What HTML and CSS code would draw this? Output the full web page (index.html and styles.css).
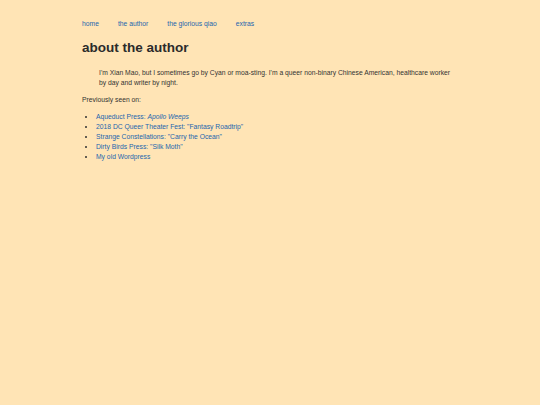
FILE: index.html
```html
<!DOCTYPE html>
<html lang="en">
<head>
<meta charset="utf-8">
<title>about the author</title>
<link rel="stylesheet" href="styles.css">
</head>
<body>
<div class="page">
  <nav class="nav">
    <a href="#">home</a>
    <a href="#">the author</a>
    <a href="#">the glorious qiao</a>
    <a href="#">extras</a>
  </nav>
  <h1 class="title">about the author</h1>
  <p class="bio">I'm Xian Mao, but I sometimes go by Cyan or moa-sting. I'm a queer non-binary Chinese American, healthcare worker by day and writer by night.</p>
  <p class="lead">Previously seen on:</p>
  <ul class="list">
    <li><a href="#">Aqueduct Press: <em>Apollo Weeps</em></a></li>
    <li><a href="#">2018 DC Queer Theater Fest: "Fantasy Roadtrip"</a></li>
    <li><a href="#">Strange Constellations: "Carry the Ocean"</a></li>
    <li><a href="#">Dirty Birds Press: "Silk Moth"</a></li>
    <li><a href="#">My old Wordpress</a></li>
  </ul>
</div>
</body>
</html>
```
FILE: styles.css
```css
html, body {
  margin: 0;
  padding: 0;
  background: #ffe4b5;
}
body {
  font-family: "Liberation Sans", Arial, sans-serif;
  font-size: 6.75px;
  line-height: 10px;
  color: #333;
}
a {
  color: #2465ae;
  text-decoration: none;
}
.page {
  width: 376px;
  margin-left: 82px;
  padding-top: 19px;
}
.nav {
  display: flex;
  gap: 19px;
}
.title {
  margin: 10.5px 0 0;
  font-size: 13.5px;
  line-height: 16px;
  font-weight: bold;
  color: #2b2b2b;
}
.bio {
  margin: 12px 0 0;
  padding-left: 17px;
}
.lead {
  margin: 7px 0 0;
}
.list {
  margin: 7px 0 0;
  padding-left: 14px;
}
.list li::marker {
  font-size: 8px;
}
```
